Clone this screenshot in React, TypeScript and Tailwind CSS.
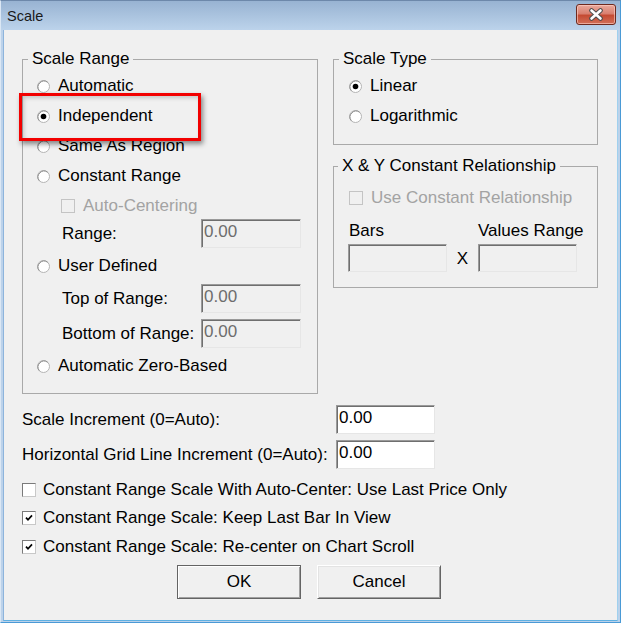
import React from 'react';

const font = "font-['Liberation_Sans',Arial,sans-serif]";

function Radio({ checked = false }: { checked?: boolean }) {
  return (
    <svg width="13" height="13" viewBox="0 0 13 13" className="shrink-0">
      <circle cx="6.5" cy="6.5" r="6" fill="#fff" stroke="#b4b4b4" />
      <path d="M2.3 10.7 A6 6 0 0 1 10.7 2.3" fill="none" stroke="#8c8c8c" />
      {checked && <circle cx="6.5" cy="6.5" r="2.8" fill="#000" />}
    </svg>
  );
}

function Check({ checked = false, disabled = false }: { checked?: boolean; disabled?: boolean }) {
  return (
    <span
      className={`w-[14px] h-[14px] shrink-0 flex items-center justify-center border ${
        disabled
          ? 'border-[#c4c4c4] bg-[#f0f0f0]'
          : 'border-t-[#7a7a7a] border-l-[#7a7a7a] border-r-[#c8c8c8] border-b-[#c8c8c8] bg-white'
      }`}
    >
      {checked && (
        <svg width="10" height="10" viewBox="0 0 10 10">
          <path d="M2 4.6 L4 6.8 L8 2.4" fill="none" stroke="#000" strokeWidth="1.7" />
        </svg>
      )}
    </span>
  );
}

function Field({ value = '', disabled = false, w = 'w-[100px]', h = 'h-[29px]' }: { value?: string; disabled?: boolean; w?: string; h?: string }) {
  return (
    <div
      className={`${w} ${h} shrink-0 flex items-center pl-[2px] pb-[3px] border border-t-[#9a9a9a] border-l-[#9a9a9a] border-r-[#e6e6e6] border-b-[#e6e6e6] shadow-[inset_1px_1px_0_#6f6f6f] ${
        disabled ? 'bg-[#f0f0f0] text-[#6d6d6d]' : 'bg-white text-black'
      }`}
    >
      {value}
    </div>
  );
}

function RadioRow({ label, checked, h = 'h-[30px]', pl = 'pl-[14px]' }: { label: string; checked?: boolean; h?: string; pl?: string }) {
  return (
    <div className={`flex items-center gap-[8px] ${h} ${pl}`}>
      <Radio checked={checked} />
      <span>{label}</span>
    </div>
  );
}

export default function App() {
  return (
    <div className={`${font} relative w-[621px] h-[623px] flex flex-col bg-[#bcd2ea] border-t border-t-[#6d88aa] border-l border-l-[#dbe7f4] border-r border-r-[#4a9ad6] border-b border-b-[#4a9ad6] text-[17px] text-black overflow-hidden`}>
      {/* Title bar */}
      <div className="h-[29px] shrink-0 flex items-center justify-between bg-[linear-gradient(180deg,#98b3d2,#bcd3eb)] pl-[6px] pr-[4px]">
        <span className="text-[14.5px] text-[#1a1a1a] pt-[3px]">Scale</span>
        <div className="w-[40px] h-[21px] mt-[-2px] rounded-[3px] border border-[#6e2a1f] shadow-[inset_0_0_0_1px_rgba(255,210,200,0.6)] bg-[linear-gradient(180deg,#e9a99c,#d98070_45%,#c54b33_55%,#d26f58)] flex items-center justify-center">
          <svg width="16" height="13" viewBox="0 0 16 13">
            <path d="M3.5 2.5 L12.5 10.5 M12.5 2.5 L3.5 10.5" stroke="#4d4d4d" strokeWidth="4.6" strokeLinecap="round" />
            <path d="M3.5 2.5 L12.5 10.5 M12.5 2.5 L3.5 10.5" stroke="#fff" strokeWidth="2.6" strokeLinecap="round" />
          </svg>
        </div>
      </div>

      {/* Client area */}
      <div className="flex-1 mx-[2px] mb-[1px] bg-[#f0f0f0] border-l border-l-[#8db4dc] border-r border-r-[#9fd0ee] border-b border-b-[#5eb0e2] pl-[18px] pt-[19px]">
        <div className="flex gap-[15px]">
          {/* Scale Range */}
          <fieldset className="w-[296px] border border-[#a9a9a9] pt-[2px] pb-[9px]">
            <legend className="ml-[5px] px-[4px] leading-[20px]">Scale Range</legend>
            <RadioRow label="Automatic" />
            <RadioRow label="Independent" checked />
            <RadioRow label="Same As Region" />
            <RadioRow label="Constant Range" />
            <div className="flex items-center gap-[8px] h-[30px] pl-[38px] text-[#a3a3a3]">
              <Check disabled />
              <span>Auto-Centering</span>
            </div>
            <div className="flex items-center h-[29px] -mt-[2px] pl-[39px]">
              <span className="w-[139px]">Range:</span>
              <Field value="0.00" disabled />
            </div>
            <RadioRow label="User Defined" h="h-[36px]" />
            <div className="flex items-center h-[29px] pl-[39px]">
              <span className="w-[139px]">Top of Range:</span>
              <Field value="0.00" disabled />
            </div>
            <div className="flex items-center h-[29px] mt-[6px] pl-[39px]">
              <span className="w-[139px]">Bottom of Range:</span>
              <Field value="0.00" disabled />
            </div>
            <RadioRow label="Automatic Zero-Based" h="h-[36px]" />
          </fieldset>

          {/* Right column */}
          <div className="w-[265px] flex flex-col">
            <fieldset className="border border-[#a9a9a9] pt-[2px] pb-[13px]">
              <legend className="ml-[5px] px-[4px] leading-[20px]">Scale Type</legend>
              <RadioRow label="Linear" checked pl="pl-[15px]" />
              <RadioRow label="Logarithmic" pl="pl-[15px]" />
            </fieldset>

            <fieldset className="mt-[11px] border border-[#a9a9a9] pt-[7px] pb-[15px]">
              <legend className="ml-[4px] px-[4px] leading-[20px]">X &amp; Y Constant Relationship</legend>
              <div className="flex items-center gap-[8px] h-[30px] pl-[15px] text-[#a3a3a3]">
                <Check disabled />
                <span>Use Constant Relationship</span>
              </div>
              <div className="flex items-center h-[20px] mt-[8px] pl-[15px]">
                <span className="w-[129px]">Bars</span>
                <span>Values Range</span>
              </div>
              <div className="flex items-center mt-[3px] pl-[14px]">
                <Field disabled w="w-[99px]" h="h-[28px]" />
                <span className="w-[31px] text-center pt-[2px]">X</span>
                <Field disabled w="w-[99px]" h="h-[28px]" />
              </div>
            </fieldset>
          </div>
        </div>

        {/* Increments */}
        <div className="flex items-center mt-[11px]">
          <span className="w-[314px]">Scale Increment (0=Auto):</span>
          <Field value="0.00" w="w-[99px]" />
        </div>
        <div className="flex items-center mt-[6px]">
          <span className="w-[314px]">Horizontal Grid Line Increment (0=Auto):</span>
          <Field value="0.00" w="w-[99px]" />
        </div>

        {/* Checkboxes */}
        <div className="flex items-center gap-[7px] h-[28px] mt-[7px]">
          <Check />
          <span>Constant Range Scale With Auto-Center: Use Last Price Only</span>
        </div>
        <div className="flex items-center gap-[7px] h-[28px]">
          <Check checked />
          <span>Constant Range Scale: Keep Last Bar In View</span>
        </div>
        <div className="flex items-center gap-[7px] h-[28px] mt-[1px]">
          <Check checked />
          <span>Constant Range Scale: Re-center on Chart Scroll</span>
        </div>

        {/* Buttons */}
        <div className="flex gap-[16px] mt-[4px] ml-[155px]">
          <button className="w-[124px] h-[34px] bg-[#f0f0f0] border border-[#646464] shadow-[inset_1px_1px_0_#ffffff,inset_-1px_-1px_0_#a0a0a0]">
            OK
          </button>
          <button className="w-[124px] h-[34px] bg-[#f0f0f0] border border-t-[#ffffff] border-l-[#ffffff] border-r-[#646464] border-b-[#646464] shadow-[inset_1px_1px_0_#e3e3e3,inset_-1px_-1px_0_#a0a0a0]">
            Cancel
          </button>
        </div>
      </div>

      {/* Highlight annotation */}
      <div className="absolute left-[18px] top-[92px] w-[182px] h-[48px] border-[3px] border-[#f20000] shadow-[2px_3px_5px_rgba(0,0,0,0.45),inset_2px_2px_4px_rgba(0,0,0,0.18)]" />
    </div>
  );
}
